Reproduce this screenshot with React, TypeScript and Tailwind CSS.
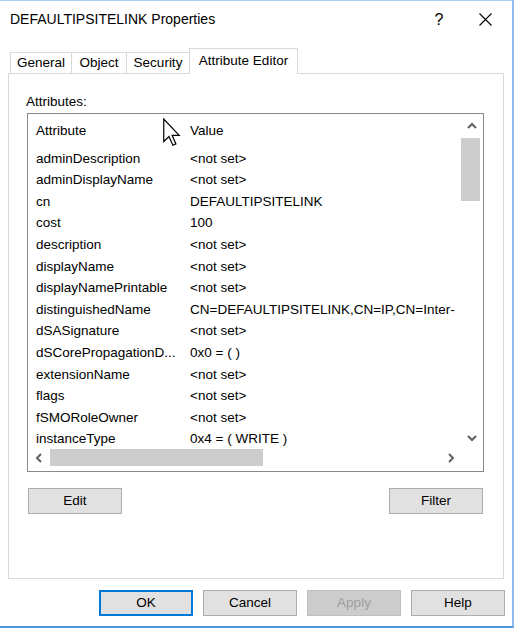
import React from "react";

const rows: [string, string][] = [
  ["adminDescription", "<not set>"],
  ["adminDisplayName", "<not set>"],
  ["cn", "DEFAULTIPSITELINK"],
  ["cost", "100"],
  ["description", "<not set>"],
  ["displayName", "<not set>"],
  ["displayNamePrintable", "<not set>"],
  ["distinguishedName", "CN=DEFAULTIPSITELINK,CN=IP,CN=Inter-"],
  ["dSASignature", "<not set>"],
  ["dSCorePropagationD...", "0x0 = ( )"],
  ["extensionName", "<not set>"],
  ["flags", "<not set>"],
  ["fSMORoleOwner", "<not set>"],
  ["instanceType", "0x4 = ( WRITE )"],
];

function Chevron({ dir }: { dir: "up" | "down" | "left" | "right" }) {
  const pts: Record<string, string> = {
    up: "1,6 5,2 9,6",
    down: "1,2 5,6 9,2",
    left: "6,1 2,5 6,9",
    right: "2,1 6,5 2,9",
  };
  const horizontal = dir === "left" || dir === "right";
  return (
    <svg
      width={horizontal ? 8 : 10}
      height={horizontal ? 10 : 8}
      viewBox={horizontal ? "0 0 8 10" : "0 0 10 8"}
    >
      <polyline points={pts[dir]} fill="none" stroke="#606060" strokeWidth="2" />
    </svg>
  );
}

function Btn({ label, className = "" }: { label: string; className?: string }) {
  return (
    <div
      className={
        "w-[94px] h-[26px] flex items-center justify-center text-[13.5px] border " +
        className
      }
    >
      {label}
    </div>
  );
}

export default function App() {
  return (
    <div className="w-[514px] h-[628px] bg-white border-t border-t-[#a6cbf0] border-r-2 border-r-[#8dbbea] border-b-2 border-b-[#4f98dc] flex flex-col font-['Liberation_Sans',Arial,sans-serif] text-black relative overflow-hidden">
      {/* Title bar */}
      <div className="h-[37px] flex items-center pl-[10px] pr-[4px]">
        <span className="text-[14px]">DEFAULTIPSITELINK Properties</span>
        <div className="ml-auto w-[46px] h-full flex items-center justify-center text-[16px]">?</div>
        <div className="w-[46px] h-full flex items-center justify-center">
          <svg width="13" height="13" viewBox="0 0 13 13">
            <path d="M0.5 0.5 L12.5 12.5 M12.5 0.5 L0.5 12.5" stroke="#000" strokeWidth="1.1" />
          </svg>
        </div>
      </div>

      {/* Tabs */}
      <div className="mt-[10px] pl-[10px] flex items-end text-[13.5px]">
        <div className="w-[62px] h-[21px] border border-b-0 border-[#d9d9d9] flex items-center justify-center">General</div>
        <div className="-ml-px w-[56px] h-[21px] border border-b-0 border-[#d9d9d9] flex items-center justify-center">Object</div>
        <div className="-ml-px w-[64px] h-[21px] border border-b-0 border-[#d9d9d9] flex items-center justify-center">Security</div>
        <div className="-ml-px w-[109px] h-[26px] -mb-px relative z-10 bg-white border border-b-0 border-[#d9d9d9] flex items-center justify-center pb-px">Attribute Editor</div>
      </div>

      {/* Panel */}
      <div className="ml-[8px] w-[496px] h-[506px] border border-[#d9d9d9] pl-[17px] pt-[20px] flex flex-col text-[13.5px]">
        <div className="leading-[16px]">Attributes:</div>
        <div className="mt-[3px] ml-px w-[457px] h-[359px] border border-[#828790] flex flex-col bg-white">
          <div className="h-[334px] flex">
            <div className="w-[433px] h-full overflow-hidden">
              <div className="h-[34px] flex items-center">
                <div className="w-[154px] pl-[8px]">Attribute</div>
                <div className="pl-[8px]">Value</div>
              </div>
              {rows.map(([a, v]) => (
                <div key={a} className="h-[21.6px] flex items-center whitespace-nowrap">
                  <div className="w-[154px] shrink-0 pl-[8px] overflow-hidden">{a}</div>
                  <div className="pl-[8px] overflow-hidden">{v}</div>
                </div>
              ))}
            </div>
            <div className="w-[22px] h-full flex flex-col">
              <div className="h-[24px] flex items-center justify-center">
                <Chevron dir="up" />
              </div>
              <div className="w-[19px] h-[63px] bg-[#cdcdcd]" />
              <div className="flex-1" />
              <div className="h-[21px] flex items-center justify-center">
                <Chevron dir="down" />
              </div>
            </div>
          </div>
          <div className="h-[23px] flex items-start">
            <div className="w-[22px] h-[19px] flex items-center justify-center">
              <Chevron dir="left" />
            </div>
            <div className="w-[213px] h-[17px] mt-px bg-[#cdcdcd]" />
            <div className="flex-1" />
            <div className="w-[21px] h-[19px] flex items-center justify-center">
              <Chevron dir="right" />
            </div>
            <div className="w-[22px]" />
          </div>
        </div>
        <div className="mt-[16px] ml-[2px] w-[455px] flex justify-between">
          <Btn label="Edit" className="bg-[#e1e1e1] border-[#adadad]" />
          <Btn label="Filter" className="bg-[#e1e1e1] border-[#adadad]" />
        </div>
      </div>

      {/* Bottom buttons */}
      <div className="mt-[11px] flex justify-end gap-[10px] pr-[7px]">
        <Btn label="OK" className="bg-[#e1e1e1] border-2 border-[#0078d7]" />
        <Btn label="Cancel" className="bg-[#e1e1e1] border-[#adadad]" />
        <Btn label="Apply" className="bg-[#cccccc] border-[#bfbfbf] text-[#9d9d9d]" />
        <Btn label="Help" className="bg-[#e1e1e1] border-[#adadad]" />
      </div>

      {/* Mouse cursor */}
      <svg className="absolute left-[163px] top-[117px]" width="18" height="29" viewBox="0 0 12 19">
        <path
          d="M0.5 0.5 L0.5 15.5 L4 12.2 L6.6 18 L8.6 17.1 L6.1 11.4 L10.8 11.4 Z"
          fill="#fff"
          stroke="#000"
          strokeWidth="0.8"
          strokeLinejoin="miter"
        />
      </svg>
    </div>
  );
}
